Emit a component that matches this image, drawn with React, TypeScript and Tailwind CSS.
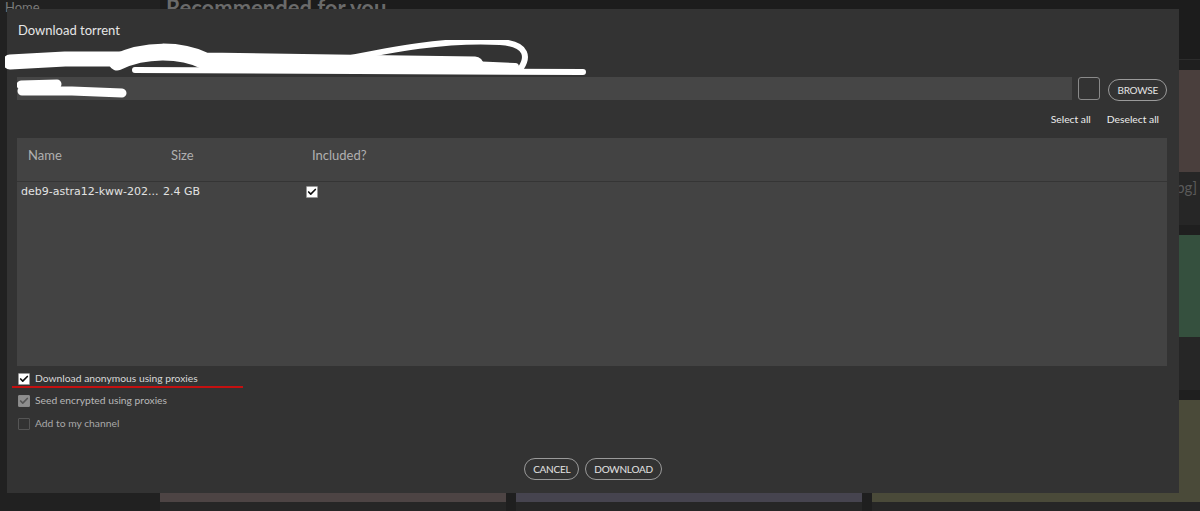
import { Check } from 'lucide-react';

const font = { fontFamily: '"Segoe UI", Lato, "Liberation Sans", sans-serif' };

const cards = [
  ['bg-[#3f3a3a]', 'bg-[#3c3b44]', 'bg-[#4a3f3d]'],
  ['bg-[#36423a]', 'bg-[#3d3a40]', 'bg-[#35503e]'],
  ['bg-[#4d4444]', 'bg-[#46444f]', 'bg-[#4a4a39]'],
];

const Box = ({ state }: { state: 'on' | 'dim' | 'off' }) => {
  if (state === 'on')
    return (
      <span className="flex h-[12px] w-[12px] shrink-0 items-center justify-center rounded-[1px] border border-[#9a9a9a] bg-white">
        <Check size={10} strokeWidth={4} color="#111" />
      </span>
    );
  if (state === 'dim')
    return (
      <span className="flex h-[12px] w-[12px] shrink-0 items-center justify-center rounded-[1px] border border-[#8a8a8a] bg-[#8e8e8e]">
        <Check size={10} strokeWidth={4} color="#555" />
      </span>
    );
  return <span className="h-[12px] w-[12px] shrink-0 rounded-[1px] border border-[#555]" />;
};

const Pill = ({ label }: { label: string }) => (
  <button className="h-[22px] rounded-full border border-[#9a9a9a] px-[8px] text-[10px] tracking-tight text-[#e4e4e4]">
    {label}
  </button>
);

export default function App() {
  return (
    <div className="relative h-[511px] w-[1200px] overflow-hidden bg-[#1f1f1f]" style={font}>
      {/* page behind the dialog */}
      <div className="flex h-full">
        <div className="w-[160px] shrink-0 bg-[#212121] pl-[5px] text-[13px] leading-[14px] text-[#7a7a7a]">Home</div>
        <div className="flex min-w-0 flex-1 flex-col">
          <div className="h-[60px] shrink-0 border-b border-[#2c2c2c] bg-[#1c1c1c] pl-[6px]">
            <h1 className="-mt-[9px] text-[22px] font-bold text-[#6a6a6a]">Recommended for you</h1>
          </div>
          <div className="mt-[10px] grid shrink-0 grid-cols-[346px_346px_346px] gap-[10px]">
            {cards.flat().map((c, i) => (
              <div key={i} className="flex flex-col">
                <div className={`h-[102px] ${c}`} />
                <div className="h-[53px] bg-[#262626] pr-[21px] pt-[4px] text-right text-[15px] text-[#5a5a5a]">
                  {i === 2 ? 'Astra Linux [x64] [.jpg]' : ''}
                </div>
              </div>
            ))}
          </div>
        </div>
      </div>

      {/* dialog */}
      <div className="absolute left-[7px] top-[9px] flex h-[484px] w-[1172px] flex-col bg-[#333333] pl-[10px] pr-[12px]">
        <div className="pl-[1px] pt-[12px] text-[13px] leading-[19px] text-[#e6e6e6]">Download torrent</div>
        <div className="h-[37px] shrink-0">
          <svg width="585" height="37" viewBox="0 0 585 37" className="-ml-[12px]" fill="none" stroke="white" strokeLinecap="round" strokeLinejoin="round">
            <path d="M5 22 L60 19 L115 19" strokeWidth="15" />
            <path d="M112 22 C140 9 175 9 200 21 L330 23 L470 25" strokeWidth="17" />
            <path d="M330 21 C390 9 440 -1 495 2 C525 4 522 19 516 28" strokeWidth="6" />
            <path d="M130 30 L578 32" strokeWidth="6" />
            <path d="M420 23 L510 27" strokeWidth="8" />
          </svg>
        </div>
        <div className="flex h-[23px] shrink-0 items-center">
          <div className="relative h-full flex-1 bg-[#464646]">
            <svg width="120" height="23" viewBox="0 0 120 23" fill="none" stroke="white" strokeLinecap="round">
              <path d="M4 8 L40 7 M5 14 L55 14 L105 16" strokeWidth="9" />
            </svg>
          </div>
          <div className="ml-[6px] h-[23px] w-[22px] rounded-[3px] border border-[#8a8a8a]" />
          <div className="ml-[8px]">
            <Pill label="BROWSE" />
          </div>
        </div>
        <div className="mt-[12px] flex h-[16px] shrink-0 items-center justify-end gap-[16px] pr-[8px] text-[10.3px] text-[#ececec]">
          <span>Select all</span>
          <span>Deselect all</span>
        </div>
        <div className="mt-[10px] flex h-[228px] shrink-0 flex-col bg-[#434343]">
          <div className="flex h-[44px] items-start border-b border-[#353535] pt-[9px] text-[13px] leading-[16px] text-[#b0b0b0]">
            <span className="w-[154px] pl-[11px]">Name</span>
            <span className="w-[141px]">Size</span>
            <span>Included?</span>
          </div>
          <div
            className="flex h-[20px] items-center text-[11px] text-[#e2e2e2]"
            style={{ fontFamily: '"DejaVu Sans", sans-serif' }}
          >
            <span className="w-[146px] pl-[4px]">deb9-astra12-kww-202...</span>
            <span className="w-[143px]">2.4 GB</span>
            <Box state="on" />
          </div>
        </div>
        <div className="mt-[6px] flex shrink-0 flex-col text-[10.3px]">
          <label className="flex h-[14px] items-center gap-[5px] pl-[1px] text-[#d8d8d8]">
            <Box state="on" />
            Download anonymous using proxies
          </label>
          <div className="-ml-[5px] h-[2px] w-[231px] bg-[#c41010]" />
          <label className="mt-[6px] flex h-[14px] items-center gap-[5px] pl-[1px] text-[#b8b8b8]">
            <Box state="dim" />
            Seed encrypted using proxies
          </label>
          <label className="mt-[9px] flex h-[14px] items-center gap-[5px] pl-[1px] text-[#a8a8a8]">
            <Box state="off" />
            Add to my channel
          </label>
        </div>
        <div className="mt-[27px] flex shrink-0 justify-center gap-[6px] pl-[2px]">
          <Pill label="CANCEL" />
          <Pill label="DOWNLOAD" />
        </div>
      </div>
    </div>
  );
}
